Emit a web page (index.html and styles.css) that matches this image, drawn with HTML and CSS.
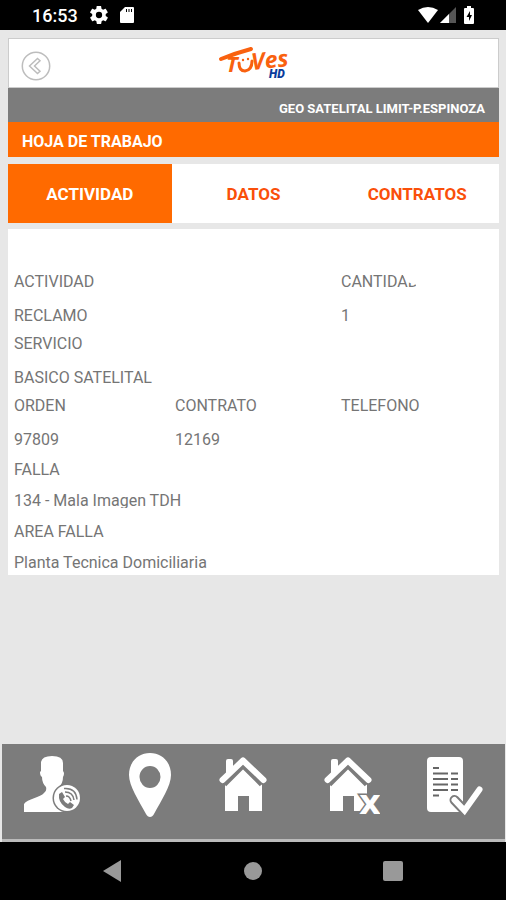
FILE: index.html
```html
<!DOCTYPE html>
<html lang="es">
<head>
  <meta charset="UTF-8">
  <meta name="viewport" content="width=device-width, initial-scale=1.0">
  <title>Hoja de trabajo</title>
  <link rel="stylesheet" href="styles.css">
</head>
<body>
  <div class="status">
    <span class="time">16:53</span>
    <svg class="gear" width="18" height="18" viewBox="2 2 20 20" fill="#fff"><path d="M19.4 13c0-.3.1-.6.1-1s0-.7-.1-1l2.1-1.6c.2-.2.2-.4.1-.6l-2-3.5c-.1-.2-.4-.3-.6-.2l-2.5 1c-.5-.4-1.100-.7-1.700-1l-.4-2.600c0-.3-.2-.5-.5-.5h-4c-.2 0-.5.2-.5.4L9 5.100c-.6.300-1.200.600-1.700 1l-2.500-1c-.200-.1-.5 0-.6.200l-2 3.500c-.100.200-.100.400.1.600L4.500 11c0 .3-.1.700-.1 1s0 .7.1 1l-2.100 1.600c-.200.200-.200.400-.1.600l2 3.500c.1.200.4.300.6.200l2.500-1c.5.400 1.100.7 1.700 1l.4 2.600c0 .2.200.4.500.4h4c.200 0 .5-.2.500-.4l.4-2.600c.6-.3 1.200-.6 1.700-1l2.500 1c.2.100.5 0 .6-.2l2-3.500c.1-.2.100-.4-.1-.6zM12 15.500a3.500 3.500 0 1 1 0-7 3.500 3.500 0 0 1 0 7z"/></svg>
    <svg width="14" height="16" viewBox="0 0 14 16"><path fill="#fff" d="M5 0h8q1 0 1 1v14q0 1-1 1H1q-1 0-1-1V5z"/><path stroke="#000" stroke-width="1" d="M6.500 2v3M9 2v3M11.500 2v3"/></svg>
    <div class="signal">
      <svg width="20" height="16" viewBox="0 0 20 16"><path fill="#fff" d="M0 3q10-6 20 0L10 16z"/></svg>
      <svg width="16" height="16" viewBox="0 0 16 16"><path fill="#555" d="M16 0v16H0z"/><path fill="#fff" d="M9 7v9H0z"/></svg>
      <svg class="battery" width="10" height="18" viewBox="0 0 10 18"><path fill="#fff" d="M3 0h4v2h2q1 0 1 1v14q0 1-1 1H1q-1 0-1-1V3q0-1 1-1h2z"/><path fill="#000" d="M6 5 2.500 11H5v4l3-6H6z"/></svg>
    </div>
  </div>

  <main>
    <header>
      <button class="back" aria-label="Volver">
        <svg width="30" height="30" viewBox="0 0 30 30" fill="none" stroke="#bdbdbd" stroke-width="1.500"><circle cx="15" cy="15" r="13.700"/><path d="m16.500 7.500 2.500 2.300-5.500 5.200 5.500 5.200-2.500 2.300L8.500 15z"/></svg>
      </button>
      <svg class="logo" width="72" height="36" viewBox="0 0 72 36" role="img" aria-label="TuVes HD">
        <g fill="none" stroke="#f9610f" stroke-linecap="round">
          <path stroke-width="4" d="M3 14Q18 8 33 4"/>
          <path stroke-width="3" d="M21 18q0 8 6 8 7-1 7-10"/>
        </g>
        <g fill="#f9610f">
          <circle cx="25" cy="15" r="1.200"/><circle cx="30" cy="14" r="1.200"/>
          <text class="brand" x="8" y="27" font-size="22">T</text>
          <text class="brand" x="34" y="25" font-size="23" transform="rotate(-6 34 25)">Ves</text>
        </g>
        <text class="hd" x="51" y="33" font-size="12">HD</text>
      </svg>
    </header>
    <div class="user">GEO SATELITAL LIMIT-P.ESPINOZA</div>
    <h1>HOJA DE TRABAJO</h1>

    <nav class="tabs">
      <button class="active">ACTIVIDAD</button>
      <button>DATOS</button>
      <button>CONTRATOS</button>
    </nav>

    <section class="panel">
      <dl class="row">
        <div><dt>ACTIVIDAD</dt><dd>RECLAMO</dd></div>
        <div class="last"><dt class="cut">CANTIDAD</dt><dd>1</dd></div>
      </dl>
      <dl class="row">
        <div class="wide"><dt>SERVICIO</dt><dd>BASICO SATELITAL</dd></div>
      </dl>
      <dl class="row">
        <div><dt>ORDEN</dt><dd>97809</dd></div>
        <div><dt>CONTRATO</dt><dd>12169</dd></div>
        <div><dt>TELEFONO</dt><dd></dd></div>
      </dl>
      <dl class="notes">
        <dt>FALLA</dt>
        <dd><span>134 - Mala Imagen TDH</span></dd>
        <dt>AREA FALLA</dt>
        <dd>Planta Tecnica Domiciliaria</dd>
      </dl>
    </section>
  </main>

  <footer>
    <button aria-label="Llamar al cliente">
      <svg width="58" height="64" viewBox="0 0 58 64">
        <path fill="#fff" d="M0 59v-8c3-5 17-7 20-11q3-2 2-6-4-4-4-10-2-1-2-5l1-1V9q1-6 11-6 11 0 11 7v8q2 2 0 6 0 6-4 10v7l10 18z"/>
        <circle cx="43" cy="45" r="14.500" fill="#7c7c7c"/>
        <circle cx="43" cy="45" r="13" fill="#fff"/>
        <path fill="#7c7c7c" d="m35 41 3-2 3 5-2 2q2 4 5 5l2-2 4 3-2 3q-3 2-7-1-7-5-6-13z"/>
        <path fill="none" stroke="#7c7c7c" stroke-width="1.500" d="M42 43q4 0 5 5M41 39q8 0 9 8M40 35.500q12-1 13 11"/>
      </svg>
    </button>
    <button aria-label="Ubicación">
      <svg width="42" height="64" viewBox="0 0 42 64"><path fill="#fff" fill-rule="evenodd" d="M21 0c12 0 21 9 21 22 0 11-10 26-17 39-2 4-6 4-8 0C10 48 0 33 0 22 0 9 9 0 21 0zm0 13a10.500 11 0 1 0 0 22 10.500 11 0 0 0 0-22z"/></svg>
    </button>
    <button aria-label="Domicilio">
      <svg width="58" height="64" viewBox="0 0 58 64">
        <path fill="#fff" d="M24 14l19 18v26H30V43H19v15H6V32z"/>
        <path fill="none" stroke="#7c7c7c" stroke-width="9" d="m4 30 20-20 20 20"/>
        <path fill="#fff" d="M7 8q0-2 2-2h3q2 0 2 2v8l-7 7z"/>
        <path fill="none" stroke="#fff" stroke-width="6" stroke-linecap="round" stroke-linejoin="round" d="M3.500 27 24 7.500 44.500 27"/>
      </svg>
    </button>
    <button aria-label="Domicilio cerrado">
      <svg width="56" height="64" viewBox="0 0 56 64">
        <path fill="#fff" d="M24 14l19 18v26H30V43H19v15H6V32z"/>
        <path fill="none" stroke="#7c7c7c" stroke-width="9" d="m4 30 20-20 20 20"/>
        <path fill="#fff" d="M7 8q0-2 2-2h3q2 0 2 2v8l-7 7z"/>
        <path fill="none" stroke="#fff" stroke-width="6" stroke-linecap="round" stroke-linejoin="round" d="M3.500 27 24 7.500 44.500 27"/>
        <text class="cross" x="35" y="61" font-size="34">x</text>
      </svg>
    </button>
    <button aria-label="Finalizar orden">
      <svg width="56" height="64" viewBox="0 0 56 64" fill="none">
        <rect y="4" width="36" height="55" rx="4" fill="#fff"/>
        <path stroke="#666" stroke-width="2" d="M6 15h6M6 20.500h15M24 20.500h7M6 26h15M24 26h7M6 31.500h15M24 31.500h7M6 37h15M24 37h7M6 42.500h6"/>
        <path stroke="#7c7c7c" stroke-width="10" stroke-linecap="round" d="m27.500 47 10 10.500 15-21"/>
        <path stroke="#fff" stroke-width="6" stroke-linecap="round" d="m27.500 47 10 10.500 15-21"/>
      </svg>
    </button>
  </footer>

  <div class="system">
    <button aria-label="Atrás"><svg width="20" height="22" viewBox="0 0 20 22"><path fill="#999" d="M18 0v22L0 11z"/></svg></button>
    <button aria-label="Inicio"><svg width="20" height="22" viewBox="0 0 20 22"><circle cx="10" cy="11" r="9" fill="#999"/></svg></button>
    <button aria-label="Recientes"><svg width="20" height="22" viewBox="0 0 20 22"><rect y="1" width="20" height="20" rx="2" fill="#999"/></svg></button>
  </div>
</body>
</html>
```
FILE: styles.css
```css
* {
  box-sizing: border-box;
  margin: 0;
  padding: 0;
}
body {
  display: flex;
  flex-direction: column;
  min-height: 100vh;
  background-color: #e7e7e7;
  color: #757575;
  font-family: Roboto, sans-serif;
  font-size: 16px;
}
button {
  border: none;
  background: none;
  font: inherit;
  cursor: pointer;
}
svg {
  display: block;
}

/* barra de estado */
.status {
  display: flex;
  align-items: center;
  height: 30px;
  padding: 0 32px;
  background-color: #000;
  color: #fff;
}
.time {
  font-size: 18px;
  font-weight: 500;
}
.gear {
  margin: 0 12px;
}
.signal {
  display: flex;
  align-items: center;
  gap: 2px;
  margin-left: auto;
}
.battery {
  margin-left: 6px;
}

main {
  flex: 1;
  padding: 8px 7px 8px 8px;
}
header {
  display: grid;
  grid-template-columns: 1fr auto 1fr;
  align-items: center;
  height: 50px;
  padding: 0 12px;
  border: 1px solid #ccc;
  background-color: #fff;
}
.back {
  justify-self: start;
  margin-top: 6px;
}
.brand {
  font-family: "Open Sans", sans-serif;
  font-style: italic;
  font-weight: 700;
}
.hd {
  fill: #0b3c9c;
  font-family: Roboto, sans-serif;
  font-style: italic;
  font-weight: 900;
}
.user {
  padding: 8px 14px 0;
  background-color: #7c7c7c;
  color: #fff;
  font-size: 13px;
  font-weight: 700;
  line-height: 26px;
  text-align: right;
}
h1 {
  padding: 5px 14px 0;
  background-color: #ff6a00;
  color: #fff;
  font-size: 16px;
  line-height: 30px;
}

.tabs {
  display: grid;
  grid-template-columns: repeat(3, 1fr);
  margin: 7px 0 6px;
  background-color: #fff;
}
.tabs button {
  height: 59px;
  color: #fa4f0a;
  font-size: 17px;
  font-weight: 700;
}
.tabs .active {
  background-color: #ff6a00;
  color: #fff;
}

.panel {
  overflow: hidden;
  padding: 39px 0 0 6px;
  background-color: #fff;
}
.row {
  display: grid;
  grid-template-columns: 161fr 166fr 158fr;
  line-height: 28px;
}
.row dd {
  min-height: 28px;
  margin-top: 6px;
}
.row .last {
  grid-column: 3;
}
.row .wide {
  grid-column: 1 / -1;
}
.cut {
  clip-path: polygon(0 0, 58px 0, 66px 50%, 75px 60%, 75px 100%, 0 100%);
}
.notes {
  margin-bottom: -3px;
  line-height: 31px;
}
.notes dd {
  height: 31px;
}
.notes span {
  display: block;
  overflow: hidden;
  height: 23px;
}

/* acciones */
footer {
  display: flex;
  justify-content: space-between;
  margin: 0 1px 0 2px;
  padding: 9px 22px 22px;
  border-bottom: 3px solid #bbb;
  background-color: #7c7c7c;
}
.cross {
  fill: #fff;
  stroke: #7c7c7c;
  stroke-width: 3px;
  paint-order: stroke;
  font-family: "DejaVu Sans", sans-serif;
  font-weight: 700;
}

.system {
  display: flex;
  align-items: center;
  justify-content: center;
  gap: 120px;
  height: 58px;
  background-color: #000;
}
```
